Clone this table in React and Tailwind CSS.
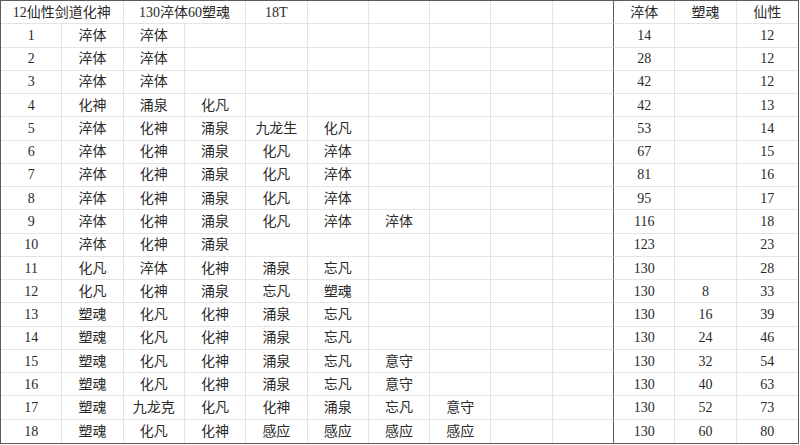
import React from "react";

const rows = [
    [["1", "淬体", "淬体"], ["14", "", "12"]],
    [["2", "淬体", "淬体"], ["28", "", "12"]],
    [["3", "淬体", "淬体"], ["42", "", "12"]],
    [["4", "化神", "涌泉", "化凡"], ["42", "", "13"]],
    [["5", "淬体", "化神", "涌泉", "九龙生", "化凡"], ["53", "", "14"]],
    [["6", "淬体", "化神", "涌泉", "化凡", "淬体"], ["67", "", "15"]],
    [["7", "淬体", "化神", "涌泉", "化凡", "淬体"], ["81", "", "16"]],
    [["8", "淬体", "化神", "涌泉", "化凡", "淬体"], ["95", "", "17"]],
    [["9", "淬体", "化神", "涌泉", "化凡", "淬体", "淬体"], ["116", "", "18"]],
    [["10", "淬体", "化神", "涌泉"], ["123", "", "23"]],
    [["11", "化凡", "淬体", "化神", "涌泉", "忘凡"], ["130", "", "28"]],
    [["12", "化凡", "化神", "涌泉", "忘凡", "塑魂"], ["130", "8", "33"]],
    [["13", "塑魂", "化凡", "化神", "涌泉", "忘凡"], ["130", "16", "39"]],
    [["14", "塑魂", "化凡", "化神", "涌泉", "忘凡"], ["130", "24", "46"]],
    [["15", "塑魂", "化凡", "化神", "涌泉", "忘凡", "意守"], ["130", "32", "54"]],
    [["16", "塑魂", "化凡", "化神", "涌泉", "忘凡", "意守"], ["130", "40", "63"]],
    [["17", "塑魂", "九龙克", "化凡", "化神", "涌泉", "忘凡", "意守"], ["130", "52", "73"]],
    [["18", "塑魂", "化凡", "化神", "感应", "感应", "感应", "感应"], ["130", "60", "80"]],
];

const Cell = ({ children, last, lastRow, divider, span }) => {
    const cls = [
        "flex items-center justify-center whitespace-nowrap",
        lastRow ? "" : "border-b border-b-[#e4e4e4]",
        last ? "" : divider ? "border-r border-r-[#5c5c5c]" : "border-r border-r-[#e4e4e4]",
        span ? "col-span-2" : "",
    ].join(" ");
    return <div className={cls}>{children}</div>;
};

const App = () => {
    const header = [
        { text: "12仙性剑道化神", span: true },
        { text: "130淬体60塑魂", span: true },
        { text: "18T" },
        { text: "" },
        { text: "" },
        { text: "" },
        { text: "" },
        { text: "", divider: true },
        { text: "淬体" },
        { text: "塑魂" },
        { text: "仙性", last: true },
    ];

    return (
        <div className="w-[800px] h-[445px] bg-white">
            <div
                className="w-[799px] h-[444px] border border-[#5c5c5c] grid grid-cols-[repeat(13,1fr)] grid-rows-[repeat(19,1fr)] text-[14px] text-[#2a2a2a]"
                style={{ fontFamily: '"Liberation Serif", "Noto Sans CJK SC", serif' }}
            >
                {header.map((h, i) => (
                    <Cell key={`h${i}`} span={h.span} divider={h.divider} last={h.last}>
                        {h.text}
                    </Cell>
                ))}
                {rows.map(([left, right], r) => {
                    const lastRow = r === rows.length - 1;
                    const cells = [];
                    for (let c = 0; c < 10; c++) {
                        cells.push(
                            <Cell key={`l${r}-${c}`} lastRow={lastRow} divider={c === 9}>
                                {left[c] || ""}
                            </Cell>
                        );
                    }
                    right.forEach((v, c) => {
                        cells.push(
                            <Cell key={`r${r}-${c}`} lastRow={lastRow} last={c === 2}>
                                {v}
                            </Cell>
                        );
                    });
                    return cells;
                })}
            </div>
        </div>
    );
};

export default App;
